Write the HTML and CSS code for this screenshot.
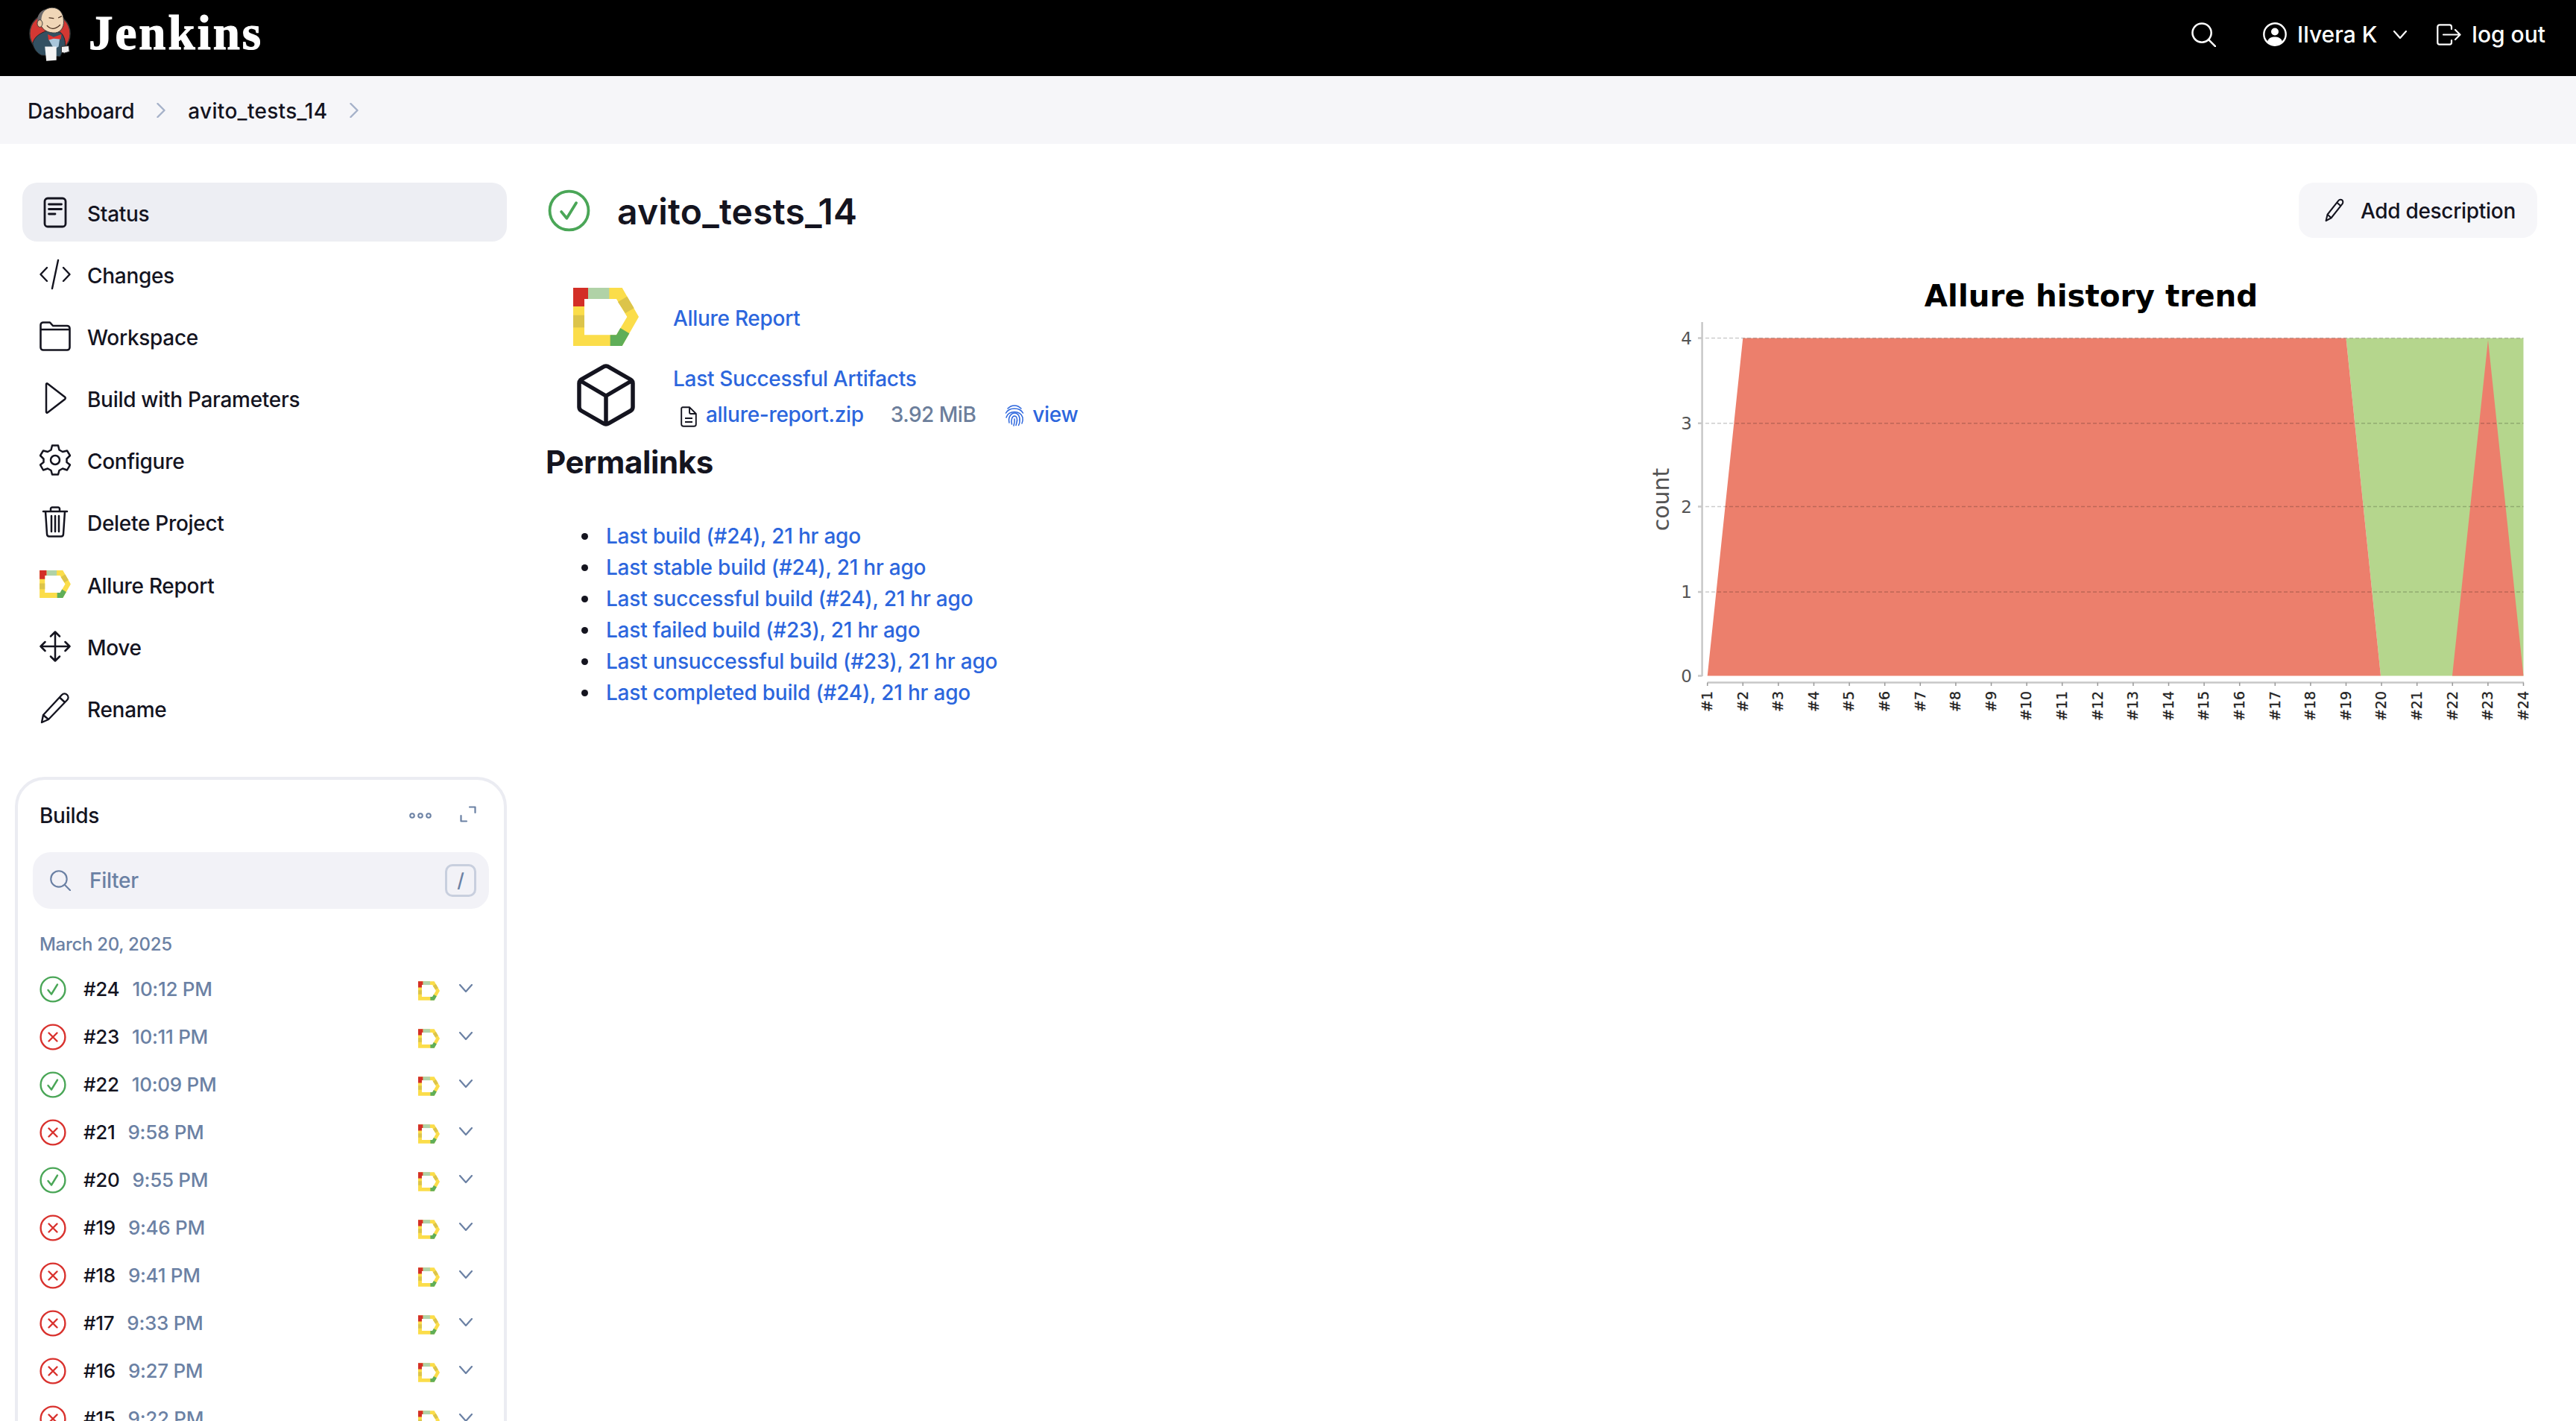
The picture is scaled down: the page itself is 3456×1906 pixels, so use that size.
FILE: index.html
```html
<!doctype html>
<html lang="en">
<head>
	<meta charset="UTF-8" />
	<title>avito_tests_14 - Jenkins</title>
	<link rel="stylesheet" href="styles.css">
</head>
<body>
	<!--icons-->
	<svg class="sprite" xmlns="http://www.w3.org/2000/svg">
		<symbol id="i-allure" viewBox="0 0 264 234">
			<path fill="#fbdd4a" fill-rule="evenodd" d="M0 0H197L264 117L197 234H0ZM45 45V190H174L217 117L174 45Z"/>
			<path fill="#d32f27" d="M0 0H60V45H45V75H0Z"/>
			<path fill="#b0d2a7" d="M60 0H145V45H60Z"/>
			<path fill="#dcc44a" d="M0 110H45V160H0ZM180 57L217 35L245 82L210 102Z"/>
			<path fill="#5fae58" d="M149 190H174L190 162L226 184L197 234H149Z"/>
		</symbol>
		<symbol id="i-ok" viewBox="0 0 36 36">
			<circle cx="18" cy="18" r="16.4" fill="none" stroke="#4aa657" stroke-width="2.4"/>
			<path d="M11.5 19L16 24.5L24 11.5" fill="none" stroke="#4aa657" stroke-width="2.4" stroke-linecap="round" stroke-linejoin="round"/>
		</symbol>
		<symbol id="i-fail" viewBox="0 0 36 36">
			<circle cx="18" cy="18" r="16.4" fill="none" stroke="#d9322e" stroke-width="2.4"/>
			<path d="M12.5 12.5L23.5 23.5M23.5 12.5L12.5 23.5" fill="none" stroke="#d9322e" stroke-width="2.4" stroke-linecap="round"/>
		</symbol>
		<symbol id="i-chev" viewBox="0 0 18 11">
			<path d="M1 1L9 10L17 1" fill="none" stroke="currentColor" stroke-width="2.2" stroke-linecap="round" stroke-linejoin="round"/>
		</symbol>
		<symbol id="i-right" viewBox="0 0 12 20">
			<path d="M1.5 1L10.5 10L1.5 19" fill="none" stroke="currentColor" stroke-width="2.4" stroke-linecap="round" stroke-linejoin="round"/>
		</symbol>
		<symbol id="i-pencil" viewBox="0 0 40 50">
			<path d="M3 47L6 34L29 5C31 2 35 2 37 4C39 6 39 10 37 12L14 41ZM26 9L34 16M6 34L14 41" fill="none" stroke="currentColor" stroke-width="3.2" stroke-linejoin="round"/>
		</symbol>
		<symbol id="i-search" viewBox="0 0 34 34">
			<circle cx="14.5" cy="14.5" r="13" fill="none" stroke="currentColor" stroke-width="2.6"/>
			<path d="M24 24L33 33" fill="none" stroke="currentColor" stroke-width="2.6" stroke-linecap="round"/>
		</symbol>
	</svg>

	<!--header-->
	<header class="top">
		<a class="brand" href="#">
			<svg class="logo" viewBox="0 0 60 78" xmlns="http://www.w3.org/2000/svg">
				<circle cx="30" cy="38" r="28" fill="#d33833" stroke="#3a3a3a" stroke-width="1.5"/>
				<path d="M6 52C8 43 15 38 26 34L44 36C50 40 52 50 51 56L44 70L18 68C12 65 8 60 6 52Z" fill="#335061" stroke="#222" stroke-width="1"/>
				<path d="M28 46L44 42L42 56L36 60Z" fill="#a9c6da"/>
				<path d="M27 39L35 43L46 39L45 46L35 45L28 47Z" fill="#e0342f"/>
				<path d="M23 56H39V75L25 76Z" fill="#f4f4f4"/>
				<path d="M46 56L56 55L57 63L50 65L46 64Z" fill="#f0f0f0" stroke="#333" stroke-width="1"/>
				<path d="M16 22C15 11 23 2 33 2C43 2 49 10 49 20C50 30 44 38 34 37C25 36 18 32 16 22Z" fill="#f0d6b7" stroke="#3a3a3a" stroke-width="1"/>
				<path d="M14 26C10 16 15 6 25 4C19 9 18 15 18 21Z" fill="#6d6b6d"/>
				<ellipse cx="16" cy="24" rx="3.600" ry="5" fill="#eac9a5" stroke="#3a3a3a" stroke-width="1"/>
				<path d="M29 16L35 17M42 16L46 14M26 27C31 33 38 32 44 26" fill="none" stroke="#4a3020" stroke-width="1.300" stroke-linecap="round"/>
			</svg>
			<span class="brand-name">Jenkins</span>
		</a>
		<div class="top-right">
			<svg class="top-search"><use href="#i-search"/></svg>
			<div class="user">
				<svg class="user-icon" viewBox="0 0 32 32" xmlns="http://www.w3.org/2000/svg">
					<circle cx="16" cy="16" r="14.7" fill="none" stroke="#fff" stroke-width="2.400"/>
					<circle cx="16" cy="12.500" r="5" fill="#fff"/>
					<path d="M6 25.500C8 20.500 12 19.500 16 19.500C20 19.500 24 20.500 26 25.500C23.500 28.500 20 30 16 30C12 30 8.500 28.500 6 25.500Z" fill="#fff"/>
				</svg>
				<span>Ilvera K</span>
				<svg class="user-chev" viewBox="0 0 18 11"><path d="M1 1L9 10L17 1" fill="none" stroke="#fff" stroke-width="2.200" stroke-linecap="round" stroke-linejoin="round"/></svg>
			</div>
			<div class="logout">
				<svg class="logout-icon" viewBox="0 0 33 29" xmlns="http://www.w3.org/2000/svg">
					<path d="M20 7V4C20 2.500 19 1.300 17.500 1.300H4C2.500 1.300 1.300 2.500 1.300 4V25C1.300 26.500 2.500 27.700 4 27.700H17.500C19 27.700 20 26.500 20 25V22M9 14.500H31M25 8L31.500 14.500L25 21" fill="none" stroke="#fff" stroke-width="2.200" stroke-linecap="round" stroke-linejoin="round"/>
				</svg>
				<span>log out</span>
			</div>
		</div>
	</header>

	<!--breadcrumb-->
	<nav class="crumbs">
		<a href="#">Dashboard</a>
		<svg class="crumb-sep"><use href="#i-right"/></svg>
		<a class="crumb-job" href="#">avito_tests_14</a>
		<svg class="crumb-sep"><use href="#i-right"/></svg>
	</nav>

	<div class="layout">
		<!--sidebar-->
		<aside class="side">
			<ul class="tasks">
				<li class="task active">
					<svg class="task-icon" viewBox="0 0 42 42"><g fill="none" stroke="#14141f" stroke-width="2.800" stroke-linecap="round"><rect x="7" y="2" width="28" height="38" rx="4"/><path d="M12.500 10H29.500M12.500 16.500H29.500M12.500 23H21"/></g></svg>
					Status
				</li>
				<li class="task">
					<svg class="task-icon" viewBox="0 0 42 42"><path d="M10 12L1.500 21L10 30M32 12L40.500 21L32 30M25 2L17 40" fill="none" stroke="#14141f" stroke-width="2.400" stroke-linecap="round" stroke-linejoin="round"/></svg>
					Changes
				</li>
				<li class="task">
					<svg class="task-icon" viewBox="0 0 42 42"><g fill="none" stroke="#14141f" stroke-width="2.600" stroke-linejoin="round"><path d="M1.500 11V6C1.500 4 3 2.500 5 2.500H14L18 7H37C39 7 40.500 8.500 40.500 10.500V36C40.500 38 39 39.500 37 39.500H5C3 39.500 1.500 38 1.500 36Z"/><path d="M1.500 12H40.500"/></g></svg>
					Workspace
				</li>
				<li class="task">
					<svg class="task-icon" viewBox="0 0 42 42"><path d="M9 2.500C9 1.500 10 1 11 1.700L34 19.500C35 20.300 35 21.700 34 22.500L11 40.300C10 41 9 40.500 9 39.500Z" fill="none" stroke="#14141f" stroke-width="2.500" stroke-linejoin="round"/></svg>
					Build with Parameters
				</li>
				<li class="task">
					<svg class="task-icon" viewBox="0 0 42 42"><g fill="none" stroke="#14141f" stroke-width="2.500" stroke-linejoin="round"><path d="M17 1.500H25L26.500 7.500L31 10L37 8.500L41 15L36.500 19.500V24L41 27.500L37 34.500L31 32.500L26.500 35L25 40.500H17L15.500 35L11 32.500L5 34.500L1 27.500L5.500 24V19.500L1 15L5 8.500L11 10L15.500 7.500Z"/><circle cx="21" cy="21" r="6"/></g></svg>
					Configure
				</li>
				<li class="task">
					<svg class="task-icon" viewBox="0 0 42 42"><g fill="none" stroke="#14141f" stroke-width="2.500" stroke-linecap="round" stroke-linejoin="round"><path d="M5 7H37M8 7L10 37C10 39 11 40.500 13 40.500H29C31 40.500 32 39 32 37L34 7M15 7V3.500C15 2.500 16 1.500 17 1.500H25C26 1.500 27 2.500 27 3.500V7M16 13V34M21 13V34M26 13V34"/></g></svg>
					Delete Project
				</li>
				<li class="task">
					<svg class="task-icon task-allure"><use href="#i-allure"/></svg>
					Allure Report
				</li>
				<li class="task">
					<svg class="task-icon" viewBox="0 0 42 42"><path d="M21 1.500V40.500M1.500 21H40.500M15 7.500L21 1.500L27 7.500M15 34.500L21 40.500L27 34.500M7.500 15L1.500 21L7.500 27M34.500 15L40.500 21L34.500 27" fill="none" stroke="#14141f" stroke-width="2.500" stroke-linecap="round" stroke-linejoin="round"/></svg>
					Move
				</li>
				<li class="task">
					<svg class="task-icon" viewBox="0 0 42 42"><path d="M3 40L5 30L30 3C32 1 35 1 37 3C39 5 39 8 37 10L12 36ZM27 6.500L34 13M5 30L12 36" fill="none" stroke="#14141f" stroke-width="2.400" stroke-linejoin="round"/></svg>
					Rename
				</li>
			</ul>

			<!--builds-->
			<section class="builds">
				<div class="builds-head">
					<span class="builds-title">Builds</span>
					<div class="builds-tools">
						<svg class="tool-dots" viewBox="0 0 30 10"><g fill="none" stroke="#6b81a4" stroke-width="2"><circle cx="4" cy="5" r="2.800"/><circle cx="15" cy="5" r="2.800"/><circle cx="26" cy="5" r="2.800"/></g></svg>
						<svg class="tool-expand" viewBox="0 0 22 22"><path d="M13 1.500H20.500V9M1.500 13V20.500H9" fill="none" stroke="#6b81a4" stroke-width="2.200" stroke-linecap="round" stroke-linejoin="round"/></svg>
					</div>
				</div>
				<div class="filter">
					<svg class="filter-icon"><use href="#i-search"/></svg>
					<span class="filter-text">Filter</span>
					<span class="kbd">/</span>
				</div>
				<div class="date">March 20, 2025</div>
				<ul class="runs">
					<li class="run"><svg class="run-status"><use href="#i-ok"/></svg><span class="run-no">#24</span><span class="run-time">10:12 PM</span><svg class="run-allure"><use href="#i-allure"/></svg><svg class="run-chev"><use href="#i-chev"/></svg></li>
					<li class="run"><svg class="run-status"><use href="#i-fail"/></svg><span class="run-no">#23</span><span class="run-time">10:11 PM</span><svg class="run-allure"><use href="#i-allure"/></svg><svg class="run-chev"><use href="#i-chev"/></svg></li>
					<li class="run"><svg class="run-status"><use href="#i-ok"/></svg><span class="run-no">#22</span><span class="run-time">10:09 PM</span><svg class="run-allure"><use href="#i-allure"/></svg><svg class="run-chev"><use href="#i-chev"/></svg></li>
					<li class="run"><svg class="run-status"><use href="#i-fail"/></svg><span class="run-no">#21</span><span class="run-time">9:58 PM</span><svg class="run-allure"><use href="#i-allure"/></svg><svg class="run-chev"><use href="#i-chev"/></svg></li>
					<li class="run"><svg class="run-status"><use href="#i-ok"/></svg><span class="run-no">#20</span><span class="run-time">9:55 PM</span><svg class="run-allure"><use href="#i-allure"/></svg><svg class="run-chev"><use href="#i-chev"/></svg></li>
					<li class="run"><svg class="run-status"><use href="#i-fail"/></svg><span class="run-no">#19</span><span class="run-time">9:46 PM</span><svg class="run-allure"><use href="#i-allure"/></svg><svg class="run-chev"><use href="#i-chev"/></svg></li>
					<li class="run"><svg class="run-status"><use href="#i-fail"/></svg><span class="run-no">#18</span><span class="run-time">9:41 PM</span><svg class="run-allure"><use href="#i-allure"/></svg><svg class="run-chev"><use href="#i-chev"/></svg></li>
					<li class="run"><svg class="run-status"><use href="#i-fail"/></svg><span class="run-no">#17</span><span class="run-time">9:33 PM</span><svg class="run-allure"><use href="#i-allure"/></svg><svg class="run-chev"><use href="#i-chev"/></svg></li>
					<li class="run"><svg class="run-status"><use href="#i-fail"/></svg><span class="run-no">#16</span><span class="run-time">9:27 PM</span><svg class="run-allure"><use href="#i-allure"/></svg><svg class="run-chev"><use href="#i-chev"/></svg></li>
					<li class="run"><svg class="run-status"><use href="#i-fail"/></svg><span class="run-no">#15</span><span class="run-time">9:22 PM</span><svg class="run-allure"><use href="#i-allure"/></svg><svg class="run-chev"><use href="#i-chev"/></svg></li>
				</ul>
			</section>
		</aside>

		<!--main-->
		<main class="main">
			<div class="head">
				<svg class="head-status"><use href="#i-ok"/></svg>
				<h1 class="title">avito_tests_14</h1>
				<button class="add-desc"><svg class="add-icon"><use href="#i-pencil"/></svg><span class="add-text">Add description</span></button>
			</div>

			<div class="cols">
				<div class="info">
					<div class="app">
						<div class="app-icon"><svg class="big-allure"><use href="#i-allure"/></svg></div>
						<a class="lnk app-first-link" href="#">Allure Report</a>
					</div>
					<div class="app app-second">
						<div class="app-icon">
							<svg class="big-box" viewBox="0 0 78 84"><path d="M39 3C37.500 3 36 3.500 35 4.300L6 21C4 22.200 3 24 3 26V58C3 60 4 61.800 6 63L35 79.700C37.500 81.200 40.500 81.200 43 79.700L72 63C74 61.800 75 60 75 58V26C75 24 74 22.200 72 21L43 4.300C42 3.500 40.500 3 39 3ZM5 23L39 43L73 23M39 43V81" fill="none" stroke="#14141f" stroke-width="5.500" stroke-linejoin="round"/></svg>
						</div>
						<div class="app-text">
							<a class="lnk" href="#">Last Successful Artifacts</a>
							<div class="artifact">
								<svg class="file-icon" viewBox="0 0 22 28"><path d="M3 1.200H12L20.800 10V24C20.800 25.700 19.700 26.800 18 26.800H4C2.300 26.800 1.200 25.700 1.200 24V3C1.200 2 2 1.200 3 1.200ZM12 1.200V8C12 9.200 12.800 10 14 10H20.800M6 16H16M6 21H16" fill="none" stroke="#14141f" stroke-width="1.900" stroke-linejoin="round"/></svg>
								<a class="lnk file-name" href="#">allure-report.zip</a>
								<span class="file-size">3.92 MiB</span>
								<svg class="print-icon" viewBox="0 0 26 30"><g fill="none" stroke="#2c66dd" stroke-width="1.500" stroke-linecap="round"><path d="M4 6C9 .5 17 .5 22 6"/><path d="M1.500 12C6 4 20 4 24.500 12"/><path d="M2 18C4 8 22 8 24 18C24.500 21 24 24 23 26"/><path d="M6 25C4 17 9 12 13 12C18 12 21 17 20 24C19.800 26 19 27.500 18.500 28.500"/><path d="M9.500 27C8 21 10 16 13 16C16 16 17.500 20 16 25L15 28.500"/><path d="M13 20C13.500 23 13 26 12 29"/></g></svg>
								<a class="lnk view-link" href="#">view</a>
							</div>
						</div>
					</div>
					<h2 class="perma-title">Permalinks</h2>
					<ul class="perma">
						<li><a class="lnk" href="#">Last build (#24), 21 hr ago</a></li>
						<li><a class="lnk" href="#">Last stable build (#24), 21 hr ago</a></li>
						<li><a class="lnk" href="#">Last successful build (#24), 21 hr ago</a></li>
						<li><a class="lnk" href="#">Last failed build (#23), 21 hr ago</a></li>
						<li><a class="lnk" href="#">Last unsuccessful build (#23), 21 hr ago</a></li>
						<li><a class="lnk" href="#">Last completed build (#24), 21 hr ago</a></li>
					</ul>
				</div>

				<!--trend chart-->
				<svg class="chart" viewBox="0 0 1204 620" xmlns="http://www.w3.org/2000/svg">
					<text class="chart-title" x="605.500" y="51" text-anchor="middle">Allure history trend</text>
					<polygon fill="#b5d68d" points="947.500,93.500 1185.500,93.500 1185.500,546.500 994,546.500"/>
					<polygon fill="#ec7f6c" points="90.700,546.500 138.300,93.500 947.500,93.500 994,546.500 1090,546.500 1138,96 1185.500,546.500"/>
					<g class="chart-grid">
						<path d="M88 93.500H1185.500M88 207.800H1185.500M88 319.600H1185.500M88 433.900H1185.500"/>
					</g>
					<path class="chart-axis" d="M83.600 72V547M90.700 555.500H1186M78 93.500H83.600M78 207.800H83.600M78 319.600H83.600M78 433.900H83.600M78 546.500H83.600"/>
					<path class="chart-axis thin" d="M90.700 555.500V560M138.300 555.500V560M185.900 555.500V560M233.500 555.500V560M281.100 555.500V560M328.700 555.500V560M376.300 555.500V560M423.900 555.500V560M471.500 555.500V560M519.100 555.500V560M566.700 555.500V560M614.300 555.500V560M661.900 555.500V560M709.500 555.500V560M757.100 555.500V560M804.700 555.500V560M852.300 555.500V560M899.900 555.500V560M947.500 555.500V560M995.100 555.500V560M1042.700 555.500V560M1090.300 555.500V560M1137.900 555.500V560M1185.500 555.500V560"/>
					<g class="chart-y" text-anchor="end">
						<text x="70" y="102">4</text>
						<text x="70" y="216">3</text>
						<text x="70" y="328">2</text>
						<text x="70" y="442">1</text>
						<text x="70" y="555">0</text>
					</g>
					<text class="chart-count" transform="translate(39 310) rotate(-90)" text-anchor="middle">count</text>
					<g class="chart-x" text-anchor="end">
						<text transform="translate(97 567) rotate(-90)">#1</text>
						<text transform="translate(144.600 567) rotate(-90)">#2</text>
						<text transform="translate(192.200 567) rotate(-90)">#3</text>
						<text transform="translate(239.800 567) rotate(-90)">#4</text>
						<text transform="translate(287.400 567) rotate(-90)">#5</text>
						<text transform="translate(335 567) rotate(-90)">#6</text>
						<text transform="translate(382.600 567) rotate(-90)">#7</text>
						<text transform="translate(430.200 567) rotate(-90)">#8</text>
						<text transform="translate(477.800 567) rotate(-90)">#9</text>
						<text transform="translate(525.400 567) rotate(-90)">#10</text>
						<text transform="translate(573 567) rotate(-90)">#11</text>
						<text transform="translate(620.600 567) rotate(-90)">#12</text>
						<text transform="translate(668.200 567) rotate(-90)">#13</text>
						<text transform="translate(715.800 567) rotate(-90)">#14</text>
						<text transform="translate(763.400 567) rotate(-90)">#15</text>
						<text transform="translate(811 567) rotate(-90)">#16</text>
						<text transform="translate(858.600 567) rotate(-90)">#17</text>
						<text transform="translate(906.200 567) rotate(-90)">#18</text>
						<text transform="translate(953.800 567) rotate(-90)">#19</text>
						<text transform="translate(1001.400 567) rotate(-90)">#20</text>
						<text transform="translate(1049 567) rotate(-90)">#21</text>
						<text transform="translate(1096.600 567) rotate(-90)">#22</text>
						<text transform="translate(1144.200 567) rotate(-90)">#23</text>
						<text transform="translate(1191.800 567) rotate(-90)">#24</text>
					</g>
				</svg>
			</div>
		</main>
	</div>
</body>
</html>
```

FILE: styles.css
```css
*{
	padding: 0;
	margin: 0;
	box-sizing: border-box;
}
ul{
	list-style: none;
}
a{
	text-decoration: none;
	color: inherit;
}
html,body{
	height: 100%;
	overflow: hidden;
}
body{
	background: #fff;
	color: #14141f;
	font-family: Inter, "Noto Sans", sans-serif;
	font-size: 28px;
	font-weight: 450;
	letter-spacing: -0.3px;
}
.sprite{
	display: none;
}

/*header*/
.top{
	height: 102px;
	background: #000;
	color: #fff;
	display: flex;
	align-items: center;
	justify-content: space-between;
	padding: 0 41px 10px 38px;
}
.brand{
	display: flex;
	align-items: center;
	gap: 23px;
}
.logo{
	width: 58px;
	height: 76px;
}
.brand-name{
	font-family: "Liberation Serif", serif;
	font-weight: 700;
	font-size: 65px;
	letter-spacing: 3px;
	line-height: 1;
	margin-top: -3px;
	-webkit-text-stroke: 1.2px #fff;
}
.top-right{
	display: flex;
	align-items: center;
	font-size: 30px;
	letter-spacing: 0;
}
.top-search{
	width: 33px;
	height: 33px;
	margin-right: 63px;
}
.user{
	display: flex;
	align-items: center;
	gap: 14px;
}
.user-icon{
	width: 32px;
	height: 32px;
}
.user-chev{
	width: 18px;
	height: 11px;
	margin-left: 8px;
}
.logout{
	display: flex;
	align-items: center;
	gap: 14px;
	margin-left: 40px;
}
.logout-icon{
	width: 33px;
	height: 29px;
}

/*breadcrumb*/
.crumbs{
	height: 91px;
	background: #f6f6f9;
	display: flex;
	align-items: center;
	gap: 30px;
	padding: 2px 0 0 37px;
}
.crumb-job{
	letter-spacing: 0.3px;
}
.crumb-sep{
	width: 12px;
	height: 20px;
	color: #a5b1c9;
	margin-top: -2px;
}

/*layout*/
.layout{
	display: flex;
	padding-top: 52px;
}
.side{
	width: 660px;
	margin-left: 20px;
	flex: none;
}
.main{
	flex: 1;
	margin-left: 52px;
	padding-right: 52px;
	min-width: 0;
}

/*sidebar tasks*/
.tasks{
	margin-left: 10px;
	display: flex;
	flex-direction: column;
	gap: 4.2px;
}
.task{
	height: 79px;
	display: flex;
	align-items: center;
	gap: 22px;
	padding: 4px 0 0 23px;
	border-radius: 20px;
}
.task.active{
	background: #edeef3;
}
.task-icon{
	width: 42px;
	height: 42px;
	margin-top: -4px;
}
.task-allure{
	height: 37px;
}

/*builds panel*/
.builds{
	margin-top: 52px;
	border: 4px solid #ebecf2;
	border-radius: 40px;
	padding: 30px 20px 60px;
}
.builds-head{
	display: flex;
	align-items: center;
	justify-content: space-between;
	height: 36px;
	padding: 0 17px 0 9px;
	font-weight: 500;
}
.builds-tools{
	display: flex;
	align-items: center;
	gap: 38px;
}
.tool-dots{
	width: 30px;
	height: 10px;
}
.tool-expand{
	width: 22px;
	height: 22px;
	margin-top: -4px;
}
.filter{
	margin-top: 31px;
	height: 76px;
	background: #f2f2f7;
	border-radius: 24px;
	display: flex;
	align-items: center;
	padding: 0 17px 0 23px;
	color: #6b81a4;
}
.filter-icon{
	width: 28px;
	height: 28px;
}
.filter-text{
	margin-left: 25px;
	flex: 1;
}
.kbd{
	width: 42px;
	height: 44px;
	border: 3px solid #c8cfde;
	border-radius: 10px;
	display: flex;
	align-items: center;
	justify-content: center;
	font-size: 26px;
}
.date{
	margin-top: 32px;
	padding-left: 9px;
	font-size: 24px;
	line-height: 32px;
	color: #6b81a4;
}
.runs{
	margin-top: 12px;
}
.run{
	height: 64px;
	display: flex;
	align-items: center;
	padding: 0 22px 0 9px;
	font-size: 26px;
}
.run-status{
	width: 36px;
	height: 36px;
	margin-right: 23px;
}
.run-no{
	margin-right: 17px;
}
.run-time{
	color: #6b81a4;
	flex: 1;
}
.run-allure{
	width: 29px;
	height: 26px;
	margin-top: 4px;
}
.run-chev{
	width: 18px;
	height: 11px;
	margin-left: 26px;
	margin-top: -2px;
	color: #6b81a4;
}

/*main heading*/
.head{
	height: 74px;
	display: flex;
	align-items: center;
}
.head-status{
	width: 57px;
	height: 57px;
	margin-left: 3px;
}
.title{
	flex: 1;
	margin-left: 36px;
	padding-top: 3px;
	font-size: 48px;
	font-weight: 600;
	letter-spacing: 0.2px;
	line-height: 60px;
}
.add-desc{
	height: 74px;
	padding: 0 29px 0 32px;
	display: flex;
	align-items: center;
	gap: 20px;
	background: #f6f6f9;
	border: 0;
	border-radius: 20px;
	color: #14141f;
	font-family: inherit;
	font-size: 28px;
	font-weight: 500;
	letter-spacing: -0.3px;
}
.add-text{
	padding-top: 2px;
}
.add-icon{
	width: 31px;
	height: 32px;
}

/*main content*/
.cols{
	display: flex;
	justify-content: space-between;
	margin-top: 41px;
}
.info{
	padding-top: 26px;
}
.app{
	display: flex;
	align-items: center;
	margin-left: 37px;
	gap: 46px;
}
.app-second{
	margin-top: 21px;
}
.app-first-link{
	margin-top: 4px;
}
.app-icon{
	width: 88px;
	display: flex;
	justify-content: center;
}
.big-allure{
	width: 88px;
	height: 78px;
}
.big-box{
	width: 78px;
	height: 84px;
}
.app-text{
	display: flex;
	flex-direction: column;
	gap: 10px;
	padding-top: 4px;
	line-height: 38px;
}
.lnk{
	color: #2c66dd;
	font-weight: 500;
}
.artifact{
	display: flex;
	align-items: center;
	padding-left: 10px;
}
.file-icon{
	width: 22px;
	height: 28px;
	margin-top: 6px;
}
.file-name{
	margin-left: 12px;
}
.file-size{
	margin-left: 36px;
	color: #6c7e9b;
	letter-spacing: -0.5px;
}
.print-icon{
	width: 26px;
	height: 30px;
	margin-left: 39px;
	margin-top: 2px;
}
.view-link{
	margin-left: 11px;
}
.perma-title{
	margin-top: 17px;
	font-size: 42px;
	font-weight: 650;
	letter-spacing: -0.4px;
	line-height: 56px;
}
.perma{
	margin-top: 50px;
	padding-left: 48px;
}
.perma li{
	display: flex;
	align-items: center;
	gap: 24px;
	line-height: 42px;
	letter-spacing: -0.22px;
}
.perma li::before{
	content: "";
	width: 9px;
	height: 9px;
	border-radius: 50%;
	background: #14141f;
}

/*trend chart*/
.chart{
	width: 1204px;
	height: 620px;
	flex: none;
}
.chart text{
	font-family: "DejaVu Sans", sans-serif;
	font-weight: 400;
	letter-spacing: 0;
}
.chart .chart-title{
	font-size: 40.4px;
	font-weight: 700;
	fill: #000;
}
.chart-grid path{
	fill: none;
	stroke: #000;
	stroke-opacity: 0.2;
	stroke-width: 1.5;
	stroke-dasharray: 5 3;
}
.chart-axis{
	fill: none;
	stroke: #c8c8c8;
	stroke-width: 2.5;
}
.chart-axis.thin{
	stroke-width: 1.5;
	stroke: #999;
}
.chart-y text{
	font-size: 23px;
	fill: #555;
}
.chart .chart-count{
	font-size: 30px;
	fill: #555;
}
.chart-x text{
	font-size: 19px;
	fill: #222;
	stroke: #222;
	stroke-width: 0.3px;
}
```
